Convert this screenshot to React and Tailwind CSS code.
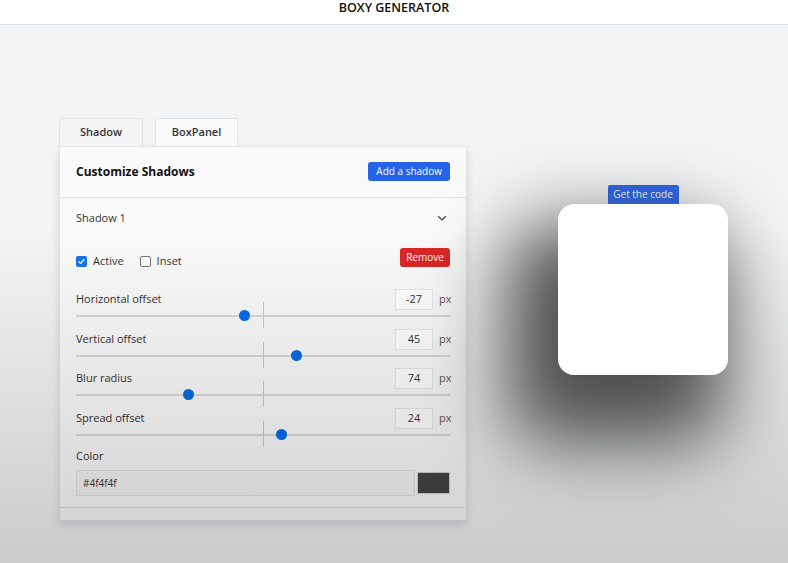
const sliders = [
  { label: 'Horizontal offset', value: '-27', pos: 168 },
  { label: 'Vertical offset', value: '45', pos: 220 },
  { label: 'Blur radius', value: '74', pos: 112 },
  { label: 'Spread offset', value: '24', pos: 205 },
]

function Slider({ label, value, pos }) {
  return (
    <div className="h-[39.5px]">
      <div className="flex h-[21px] items-center justify-between">
        <span className="text-[11px] text-[#333]">{label}</span>
        <div className="flex items-center gap-[6px]">
          <div className="flex h-[21px] w-[38px] items-center justify-center border border-[#e8e8e8] bg-white text-[11px] text-[#333]">
            {value}
          </div>
          <span className="w-[11px] text-[11px] text-[#555]">px</span>
        </div>
      </div>
      <div className="relative mt-[5px] h-[2px] bg-[#d9d9d9]">
        <div className="absolute left-[187px] top-[-13px] h-[26px] w-px bg-[#c8c8c8]" />
        <div
          className="absolute top-[-5px] h-[11px] w-[11px] rounded-full bg-[#0b6be6]"
          style={{ left: pos - 5 }}
        />
      </div>
    </div>
  )
}

export default function App() {
  return (
    <div
      className="relative min-h-[563px] overflow-hidden bg-[#f3f4f6] text-[#222]"
      style={{ fontFamily: '"Open Sans", "Noto Sans", sans-serif' }}
    >
      <header className="flex h-[25px] items-start justify-center border-b border-[#e2e2e2] bg-white pt-[2px]">
        <h1 className="text-[12.5px] font-semibold leading-[12px] text-[#111]">BOXY GENERATOR</h1>
      </header>

      <main className="flex items-start pl-[59px] pt-[93px]">
        <section className="w-[408px]">
          <div className="flex gap-[12px]">
            <button className="flex h-[28px] w-[84px] items-center justify-center rounded-t-[3px] border border-b-0 border-[#e3e3e3] bg-[#f3f4f6] text-[11px] font-semibold text-[#333]">
              Shadow
            </button>
            <button className="flex h-[28px] w-[83px] items-center justify-center rounded-t-[3px] border border-b-0 border-[#e3e3e3] bg-[#fafafa] text-[11px] font-semibold text-[#333]">
              BoxPanel
            </button>
          </div>

          <div className="rounded-b-[3px] border border-[#e3e3e3] bg-[#fafafa] shadow-[0_4px_10px_rgba(0,0,0,0.12)]">
            <div className="flex h-[51px] items-center justify-between border-b border-[#e3e3e3] px-[16px]">
              <h2 className="text-[12px] font-bold text-[#111]">Customize Shadows</h2>
              <button className="mt-[-2px] h-[19px] rounded-[3px] bg-[#2563eb] px-[8px] text-[10px] text-white">
                Add a shadow
              </button>
            </div>

            <div className="flex h-[40px] items-center justify-between px-[16px]">
              <span className="text-[11px] text-[#333]">Shadow 1</span>
              <svg className="mr-[2px] h-[12px] w-[12px] text-[#444]" viewBox="0 0 24 24" fill="none" stroke="currentColor" strokeWidth="2.2">
                <path d="M5 9l7 7 7-7" strokeLinecap="round" strokeLinejoin="round" />
              </svg>
            </div>

            <div className="px-[16px]">
              <div className="flex h-[39px] items-start justify-between pt-[10px]">
                <div className="mt-[5px] flex items-center text-[11px] text-[#333]">
                  <span className="flex h-[11px] w-[11px] items-center justify-center rounded-[2px] bg-[#1a73e8]">
                    <svg viewBox="0 0 12 12" className="h-[9px] w-[9px]" fill="none" stroke="white" strokeWidth="1.8">
                      <path d="M2.5 6.2l2.3 2.3 4.7-5" strokeLinecap="round" strokeLinejoin="round" />
                    </svg>
                  </span>
                  <span className="ml-[6px]">Active</span>
                  <span className="ml-[16px] h-[11px] w-[11px] rounded-[2px] border border-[#777] bg-white" />
                  <span className="ml-[6px]">Inset</span>
                </div>
                <button className="h-[19px] w-[50px] rounded-[3px] bg-[#dc2626] text-[10px] text-white">Remove</button>
              </div>

              <div className="pt-[12px]">
                {sliders.map((s) => (
                  <Slider key={s.label} {...s} />
                ))}
              </div>

              <div className="pt-[1px]">
                <div className="text-[11px] leading-[16px] text-[#333]">Color</div>
                <div className="mt-[6px] flex h-[26px] items-center gap-[2px]">
                  <div className="flex h-full flex-1 items-center border border-[#e3e3e3] bg-[#f5f5f5] px-[6px] text-[10px] text-[#333]">
                    #4f4f4f
                  </div>
                  <div className="h-[22px] w-[33px] border border-[#cfcfcf] bg-[#444]" />
                </div>
              </div>
            </div>

            <div className="mt-[11px] h-[13px] border-t border-[#dedede]" />
          </div>
        </section>

        <section className="relative z-10 ml-[91px] mt-[67px] flex flex-col items-center">
          <button className="h-[19px] w-[71px] rounded-t-[2px] bg-[#2563eb] text-[10px] text-white">Get the code</button>
          <div className="h-[171px] w-[170px] rounded-[16px] bg-white shadow-[-27px_45px_74px_24px_#4f4f4f]" />
        </section>
      </main>

      <div className="pointer-events-none absolute inset-0 bg-gradient-to-b from-transparent from-40% to-[rgba(0,0,0,0.17)]" />
    </div>
  )
}
